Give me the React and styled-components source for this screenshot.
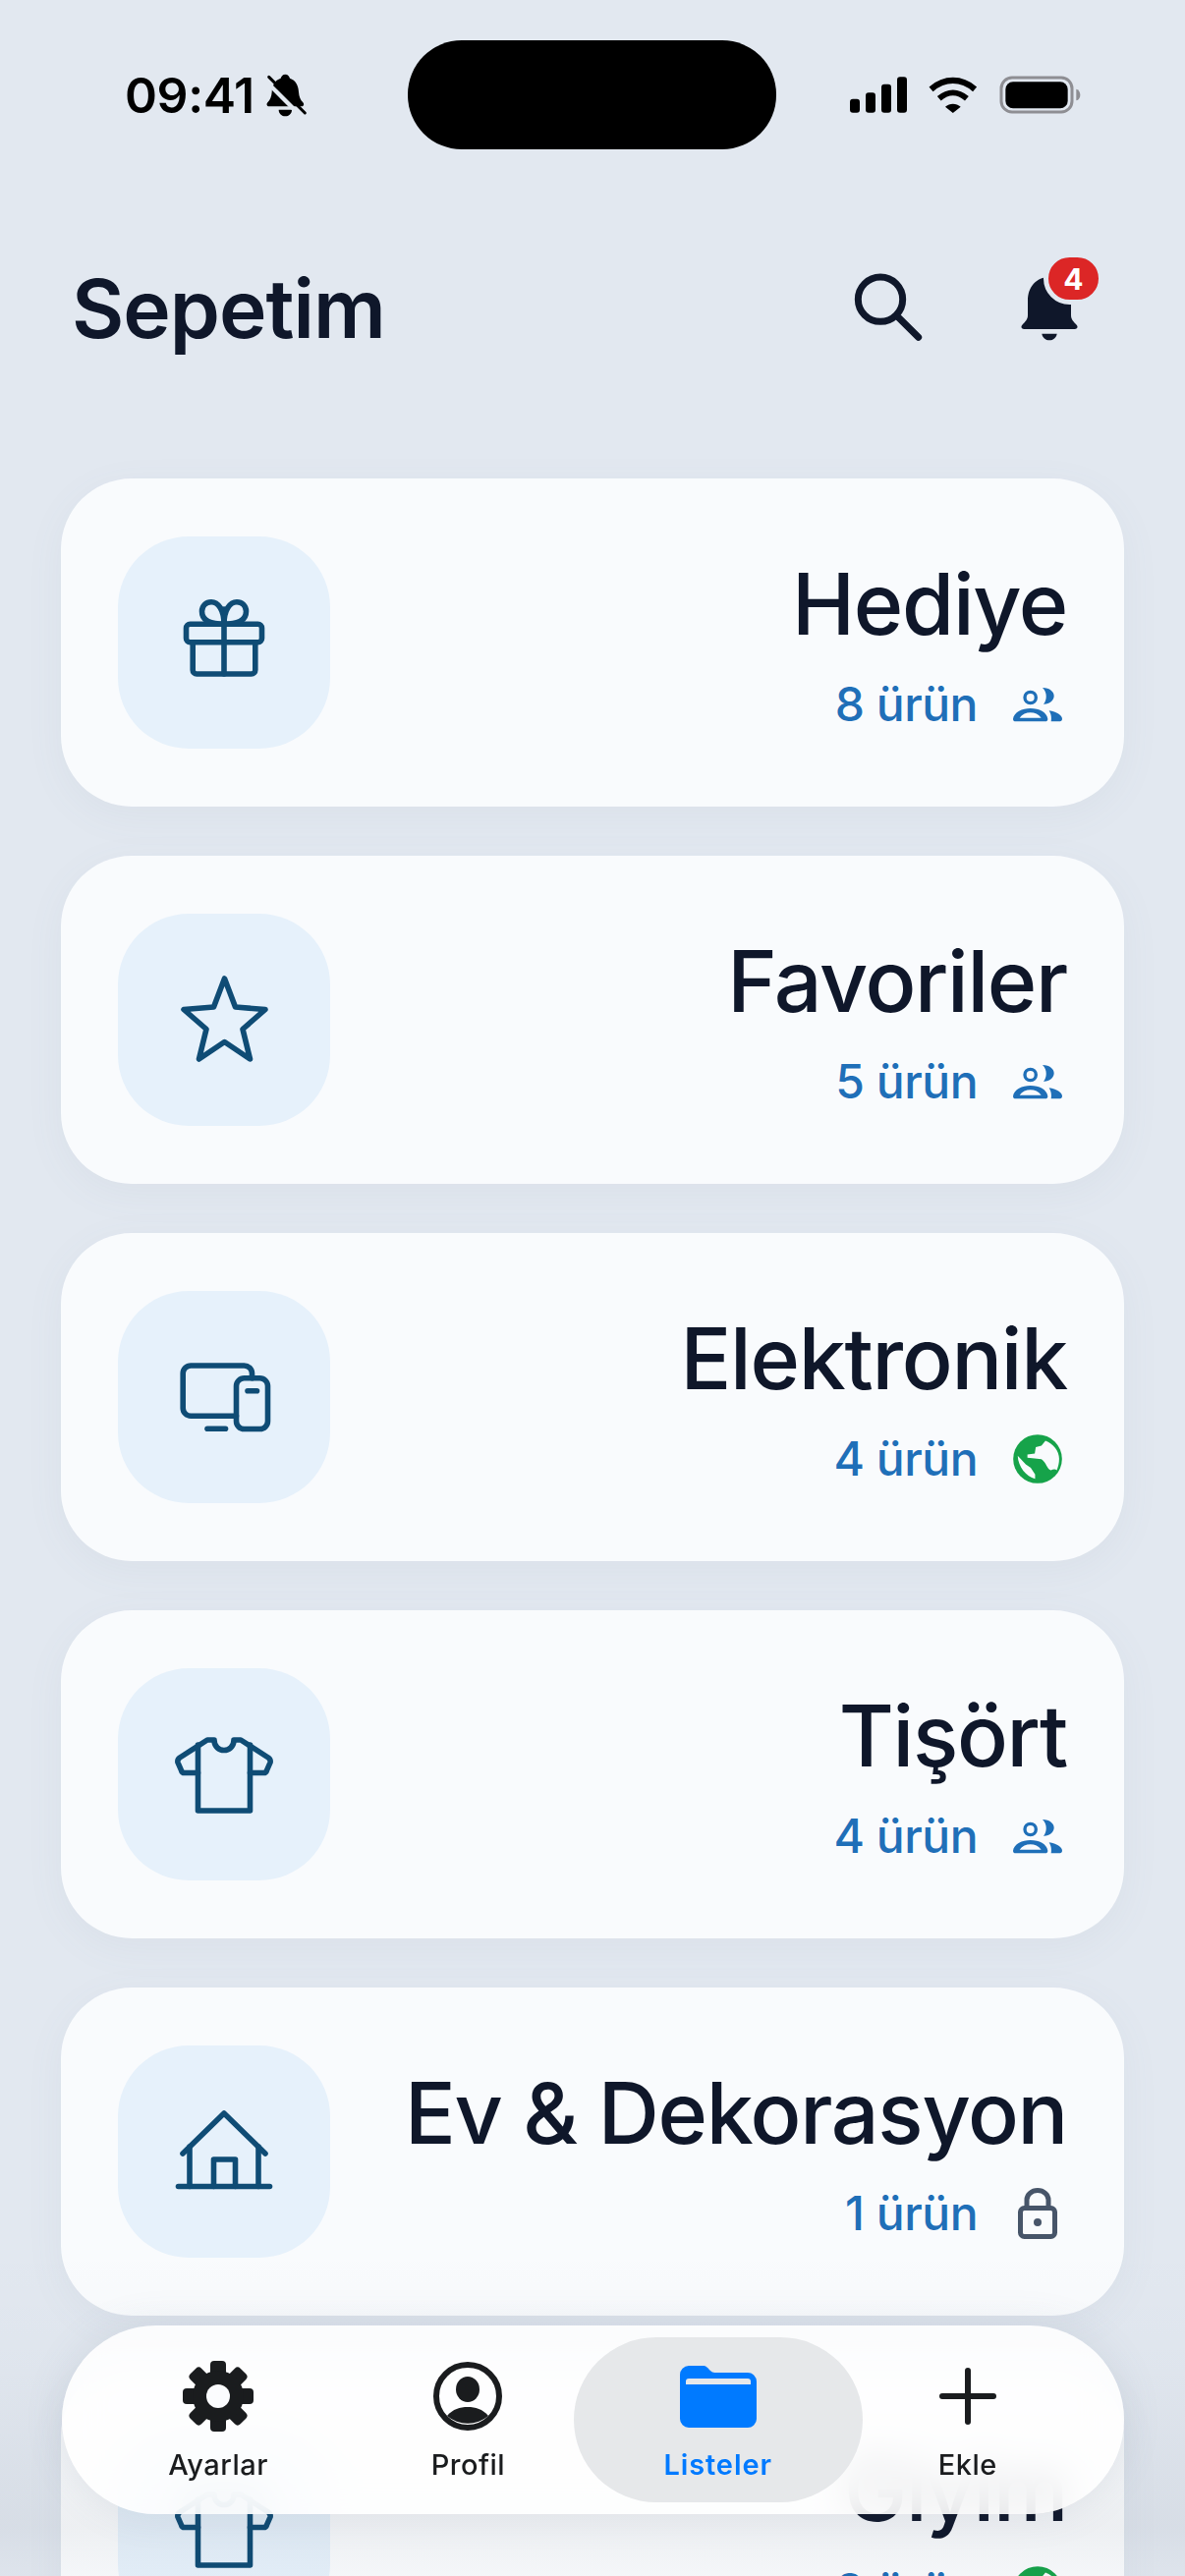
import styled, { createGlobalStyle } from 'styled-components';

const GlobalStyle = createGlobalStyle`
  html, body {
    margin: 0;
    padding: 0;
    background: #e2e8f0;
    font-family: Inter, "Liberation Sans", sans-serif;
  }
`;

function BellSlash() {
  return (
    <svg width="42" height="44" viewBox="522 50 126 132">
      <path d="M580 52c8 0 12 6 14 12 18 6 26 22 27 42 1 14 5 24 13 32 5 6 2 12-5 12H531c-7 0-10-6-5-12 8-8 12-18 13-32 1-20 9-36 27-42 2-6 6-12 14-12z" fill="#000" />
      <path d="M560 160h40c0 12-9 20-20 20s-20-8-20-20z" fill="#000" />
      <line x1="516" y1="68" x2="628" y2="180" stroke="#e2e8f0" strokeWidth="13" />
      <line x1="530" y1="60" x2="640" y2="170" stroke="#000" strokeWidth="9" strokeLinecap="round" />
    </svg>
  );
}

function Signal() {
  return (
    <svg width="58" height="37" viewBox="75 87 174 110" fill="#000">
      <rect x="75" y="155" width="30" height="42" rx="9" />
      <rect x="123" y="135" width="30" height="62" rx="9" />
      <rect x="171" y="110" width="30" height="87" rx="9" />
      <rect x="219" y="87" width="30" height="110" rx="9" />
    </svg>
  );
}

function Wifi() {
  return (
    <svg width="52" height="37" viewBox="315 85 155 113">
      <path d="M324 124c42-36 94-36 136 0" fill="none" stroke="#000" strokeWidth="19" />
      <path d="M349 153c28-24 58-24 86 0" fill="none" stroke="#000" strokeWidth="18" />
      <path d="M368 179c14-12 34-12 48 0l-24 19z" fill="#000" />
    </svg>
  );
}

function Battery() {
  return (
    <svg width="83" height="39" viewBox="533 83 249 117">
      <rect x="539" y="89" width="216" height="105" rx="33" fill="none" stroke="#8e8e93" strokeWidth="9" />
      <rect x="552" y="102" width="190" height="81" rx="23" fill="#000" />
      <path d="M768 124c8 2 12 10 12 18s-4 15-12 17z" fill="#8e8e93" />
    </svg>
  );
}

function SearchIcon() {
  return (
    <svg width="70" height="70" viewBox="87 675 210 210" fill="none" stroke="#0f172a" strokeWidth="21">
      <circle cx="168" cy="755" r="68" />
      <line x1="222" y1="809" x2="284" y2="871" strokeLinecap="round" />
    </svg>
  );
}

function BellIcon() {
  return (
    <svg width="58" height="68" viewBox="598 695 172 204" fill="#0f172a">
      <path d="M684 704c40 0 66 30 66 72v44c0 14 8 20 17 30 5 6 3 13-6 13H607c-9 0-11-7-6-13 9-10 17-16 17-30v-44c0-42 26-72 66-72z" />
      <path d="M661 877h46c-2 12-11 20-23 20s-21-8-23-20z" />
    </svg>
  );
}

const tileStroke = {
  fill: 'none',
  stroke: '#0f4c75',
  strokeWidth: 5.6,
  strokeLinecap: 'round',
  strokeLinejoin: 'round',
};

function GiftIcon() {
  return (
    <svg width="100" height="100" viewBox="0 0 100 100" {...tileStroke}>
      <rect x="11.5" y="31.2" width="77" height="18.6" rx="4" />
      <path d="M18.2 49.8V78a4 4 0 0 0 4 4h55.6a4 4 0 0 0 4-4V49.8" />
      <path d="M50 16v66" />
      <path d="M50 31.2c-9 0-22.5-1-22.5-13 0-6 4.500-9.500 9.500-9.500 7 0 13 8 13 22.500" />
      <path d="M50 31.200c9 0 22.500-1 22.500-13 0-6-4.500-9.500-9.500-9.500-7 0-13 8-13 22.500" />
    </svg>
  );
}

function StarIcon() {
  return (
    <svg width="100" height="100" viewBox="0 0 100 100" {...tileStroke} strokeWidth="5.6">
      <path d="M50.500 8L61.500 37 92 39.500 69 59.500 76.500 90 50.500 72.500 24.500 90 32 59.500 9 39.500 39.500 37z" />
    </svg>
  );
}

function DevicesIcon() {
  return (
    <svg width="100" height="100" viewBox="0 0 100 100" {...tileStroke}>
      <path d="M78.500 30.800V26a8 8 0 0 0-8-8H16.200a8 8 0 0 0-8 8v35.200a8 8 0 0 0 8 8h46.300" />
      <rect x="62.500" y="30.800" width="32" height="51.700" rx="8" />
      <path d="M74 43.700h9.500" />
      <path d="M33 82.300h18.500" />
    </svg>
  );
}

function ShirtIcon() {
  return (
    <svg width="100" height="100" viewBox="0 0 100 100" {...tileStroke}>
      <path d="M40 15h-7L5 33c-2 1.500-2.500 3-2 5l3.500 8c.5 1.500 1.500 2.500 3 2.500h14V87h53V48.500h14c1.500 0 2.500-1 3-2.500l3.500-8c.5-2 0-3.500-2-5L67 15h-7c0 14-20 14-20 0z" />
      <path d="M23.500 48.500V20" />
      <path d="M76.500 48.500V20" />
    </svg>
  );
}

function HouseIcon() {
  return (
    <svg width="100" height="100" viewBox="0 0 100 100" {...tileStroke}>
      <path d="M8 52L50 11l42 41" />
      <path d="M15 45V85.500" />
      <path d="M85 45V85.500" />
      <path d="M39.500 85.500V58h22v27.500" />
      <path d="M3.500 85.500h93" />
    </svg>
  );
}

function GroupIcon() {
  return (
    <svg width="50" height="35" viewBox="632 55 150 105" fill="#1f6fb8">
      <circle cx="685" cy="85" r="17" fill="none" stroke="#1f6fb8" strokeWidth="10" />
      <path
        fillRule="evenodd"
        d="M632 150c3-20 28-32 53-32 27 0 50 12 53 32 0 6-3 8-8 8h-90c-5 0-8-2-8-8zM652 147h66c-8-11-20-16-33-16s-25 5-33 16z"
      />
      <path d="M722 55c23 0 35 13 35 25 0 15-15 26-32 25 10-10 13-35-3-50z" />
      <path d="M742 125c23 3 40 15 40 25 0 6-4 8-10 8h-24c2-13 0-23-6-33z" />
    </svg>
  );
}

function GlobeIcon() {
  return (
    <svg width="50" height="50" viewBox="65 28 147 147">
      <circle cx="138.500" cy="101.500" r="73" fill="#16a34a" />
      <path
        d="M162 47c23 8 41 31 41 54 0 14-3 24-7 34-6-5-11-2-18 0-13-5-13-23-28-33l-20-2-22-2V88l22-3 3-19 17-4z"
        fill="#f9fbfd"
      />
      <path d="M79 92l24 26 15 10 13 20v13c-26-6-51-36-52-69z" fill="#f9fbfd" />
    </svg>
  );
}

function LockIcon() {
  return (
    <svg width="40" height="52" viewBox="0 0 40 52" fill="none" stroke="#475569" strokeWidth="5">
      <path d="M9 20v-8a11 9.500 0 0 1 22 0v8" />
      <rect x="2.500" y="20.500" width="35" height="29" rx="4" />
      <circle cx="20" cy="35" r="4" fill="#475569" stroke="none" />
    </svg>
  );
}

function GearIcon() {
  const teeth = [0, 45, 90, 135, 180, 225, 270, 315];
  return (
    <svg width="72" height="72" viewBox="0 0 72 72" fill="#1a1c1e">
      {teeth.map((angle) => (
        <rect key={angle} x="28" y="0" width="16" height="20" rx="4" transform={`rotate(${angle} 36 36)`} />
      ))}
      <circle cx="36" cy="36" r="26" />
      <circle cx="36" cy="36" r="12" fill="#fbfcfe" />
    </svg>
  );
}

function ProfileIcon() {
  return (
    <svg width="70" height="70" viewBox="0 0 70 70" fill="#1a1c1e">
      <circle cx="35" cy="35" r="32" fill="none" stroke="#1a1c1e" strokeWidth="6" />
      <ellipse cx="35" cy="28" rx="12" ry="13" />
      <path d="M14 55c6-7 13-9 21-9s15 2 21 9A32 32 0 0 1 14 55z" />
    </svg>
  );
}

function FolderIcon() {
  return (
    <svg width="78" height="63" viewBox="0 0 78 63">
      <path
        d="M9 0h14c4 0 5 2 8 5 2 2 4 2 6 2h32a9 9 0 0 1 9 9v38a9 9 0 0 1-9 9H9a9 9 0 0 1-9-9V9a9 9 0 0 1 9-9z"
        fill="#007aff"
      />
      <path d="M9 13h60a3 3 0 0 1 3 3v3H6v-3a3 3 0 0 1 3-3z" fill="#e6e8ea" />
    </svg>
  );
}

function PlusIcon() {
  return (
    <svg width="58" height="58" viewBox="0 0 58 58" stroke="#1a1c1e" strokeWidth="6" strokeLinecap="round">
      <line x1="29" y1="3" x2="29" y2="55" />
      <line x1="3" y1="29" x2="55" y2="29" />
    </svg>
  );
}

const lists = [
  { title: 'Hediye', count: '8 ürün', icon: <GiftIcon />, access: <GroupIcon /> },
  { title: 'Favoriler', count: '5 ürün', icon: <StarIcon />, access: <GroupIcon /> },
  { title: 'Elektronik', count: '4 ürün', icon: <DevicesIcon />, access: <GlobeIcon /> },
  { title: 'Tişört', count: '4 ürün', icon: <ShirtIcon />, access: <GroupIcon /> },
  { title: 'Ev & Dekorasyon', count: '1 ürün', icon: <HouseIcon />, access: <LockIcon /> },
  { title: 'Giyim', count: '8 ürün', icon: <ShirtIcon />, access: <GlobeIcon /> },
];

const tabs = [
  { label: 'Ayarlar', icon: <GearIcon /> },
  { label: 'Profil', icon: <ProfileIcon /> },
  { label: 'Listeler', icon: <FolderIcon />, active: true },
  { label: 'Ekle', icon: <PlusIcon /> },
];

export default function App() {
  return (
    <Screen>
      <GlobalStyle />
      <StatusBar>
        <StatusLeft>
          <Clock>09:41</Clock>
          <BellSlash />
        </StatusLeft>
        <Island />
        <StatusRight>
          <Signal />
          <Wifi />
          <Battery />
        </StatusRight>
      </StatusBar>

      <Header>
        <PageTitle>Sepetim</PageTitle>
        <Actions>
          <SearchIcon />
          <BellWrap>
            <BellIcon />
            <Badge>4</Badge>
          </BellWrap>
        </Actions>
      </Header>

      <List>
        {lists.map((item) => (
          <Card key={item.title}>
            <Tile>{item.icon}</Tile>
            <CardText>
              <CardTitle>{item.title}</CardTitle>
              <Meta>
                <Count>{item.count}</Count>
                <AccessSlot>{item.access}</AccessSlot>
              </Meta>
            </CardText>
          </Card>
        ))}
      </List>

      <BottomFade />

      <TabBar>
        {tabs.map((tab) => (
          <Tab key={tab.label} $active={tab.active}>
            <TabIcon>{tab.icon}</TabIcon>
            <TabLabel $active={tab.active}>{tab.label}</TabLabel>
          </Tab>
        ))}
      </TabBar>
    </Screen>
  );
}

const Screen = styled.div`
  position: relative;
  width: 1206px;
  height: 2622px;
  overflow: hidden;
  background: #e2e8f0;
`;

const StatusBar = styled.div`
  display: grid;
  grid-template-columns: 415px 375px 1fr;
  align-items: center;
  padding-top: 41px;
`;

const StatusLeft = styled.div`
  display: flex;
  align-items: center;
  gap: 12px;
  padding-left: 127px;
`;

const Clock = styled.span`
  font-size: 50px;
  line-height: 60px;
  font-weight: 600;
  letter-spacing: -0.4px;
  color: #000;
`;

const Island = styled.div`
  height: 111px;
  border-radius: 55px;
  background: #000;
`;

const StatusRight = styled.div`
  display: flex;
  align-items: center;
  justify-content: flex-end;
  gap: 21px;
  padding-right: 106px;
`;

const Header = styled.header`
  display: flex;
  align-items: center;
  justify-content: space-between;
  height: 122px;
  margin-top: 100px;
  padding: 0 109px 0 73px;
`;

const PageTitle = styled.h1`
  margin: 4px 0 0;
  font-size: 82px;
  line-height: 100px;
  font-weight: 600;
  letter-spacing: -1px;
  color: #0f172a;
`;

const Actions = styled.div`
  display: flex;
  align-items: center;
  gap: 100px;
`;

const BellWrap = styled.div`
  position: relative;
  display: flex;
`;

const Badge = styled.span`
  position: absolute;
  top: -22px;
  left: 23px;
  display: flex;
  align-items: center;
  justify-content: center;
  width: 51px;
  height: 43px;
  border: 5px solid #e2e8f0;
  border-radius: 27px;
  background: #dc2626;
  color: #fff;
  font-size: 30px;
  font-weight: 700;
`;

const List = styled.main`
  display: flex;
  flex-direction: column;
  gap: 50px;
  padding: 113px 62px 0;
`;

const Card = styled.section`
  display: flex;
  align-items: center;
  justify-content: space-between;
  flex-shrink: 0;
  height: 334px;
  padding: 0 58px;
  box-sizing: border-box;
  border-radius: 72px;
  background: #f9fbfd;
  box-shadow: 0 10px 40px rgba(100, 116, 139, 0.06);
`;

const Tile = styled.div`
  display: flex;
  align-items: center;
  justify-content: center;
  flex-shrink: 0;
  width: 216px;
  height: 216px;
  border-radius: 72px;
  background: #e6f1fb;

  svg {
    overflow: visible;
  }
`;

const CardText = styled.div`
  display: flex;
  flex-direction: column;
  align-items: flex-end;
`;

const CardTitle = styled.h2`
  margin: 0;
  font-size: 86px;
  line-height: 104px;
  font-weight: 550;
  letter-spacing: -1.3px;
  color: #0f172a;
`;

const Meta = styled.div`
  display: flex;
  align-items: center;
  gap: 36px;
  margin-top: 22px;
  padding-right: 5px;
`;

const Count = styled.span`
  font-size: 48px;
  line-height: 56px;
  font-weight: 450;
  letter-spacing: -0.5px;
  color: #1f6fb8;
`;

const AccessSlot = styled.span`
  display: flex;
  align-items: center;
  justify-content: center;
  width: 50px;
  height: 52px;
`;

const BottomFade = styled.div`
  position: absolute;
  left: 0;
  right: 0;
  bottom: 0;
  height: 340px;
  pointer-events: none;
  background: linear-gradient(
    to bottom,
    rgba(15, 23, 42, 0),
    rgba(15, 23, 42, 0.012) 35%,
    rgba(15, 23, 42, 0.05) 85%,
    rgba(15, 23, 42, 0.02) 100%
  );
`;

const TabBar = styled.nav`
  position: absolute;
  left: 63px;
  top: 2367px;
  display: grid;
  grid-template-columns: repeat(4, 1fr);
  width: 1081px;
  height: 192px;
  padding: 12px 32px;
  box-sizing: border-box;
  border-radius: 96px;
  background: rgba(255, 255, 255, 0.88);
  backdrop-filter: blur(18px);
  box-shadow: 0 0 40px rgba(100, 116, 139, 0.12);
`;

const Tab = styled.div`
  display: flex;
  flex-direction: column;
  align-items: center;
  padding-top: 24px;
  border-radius: 84px;
  ${(p) => p.$active && 'margin: 0 -20px; background: #e6e8ea;'}
`;

const TabIcon = styled.div`
  display: flex;
  align-items: center;
  justify-content: center;
  height: 72px;
`;

const TabLabel = styled.span`
  margin-top: 14px;
  font-size: 29px;
  line-height: 40px;
  font-weight: ${(p) => (p.$active ? 600 : 500)};
  letter-spacing: ${(p) => (p.$active ? '0.9px' : '0.5px')};
  color: ${(p) => (p.$active ? '#007aff' : '#1a1c1e')};
`;
